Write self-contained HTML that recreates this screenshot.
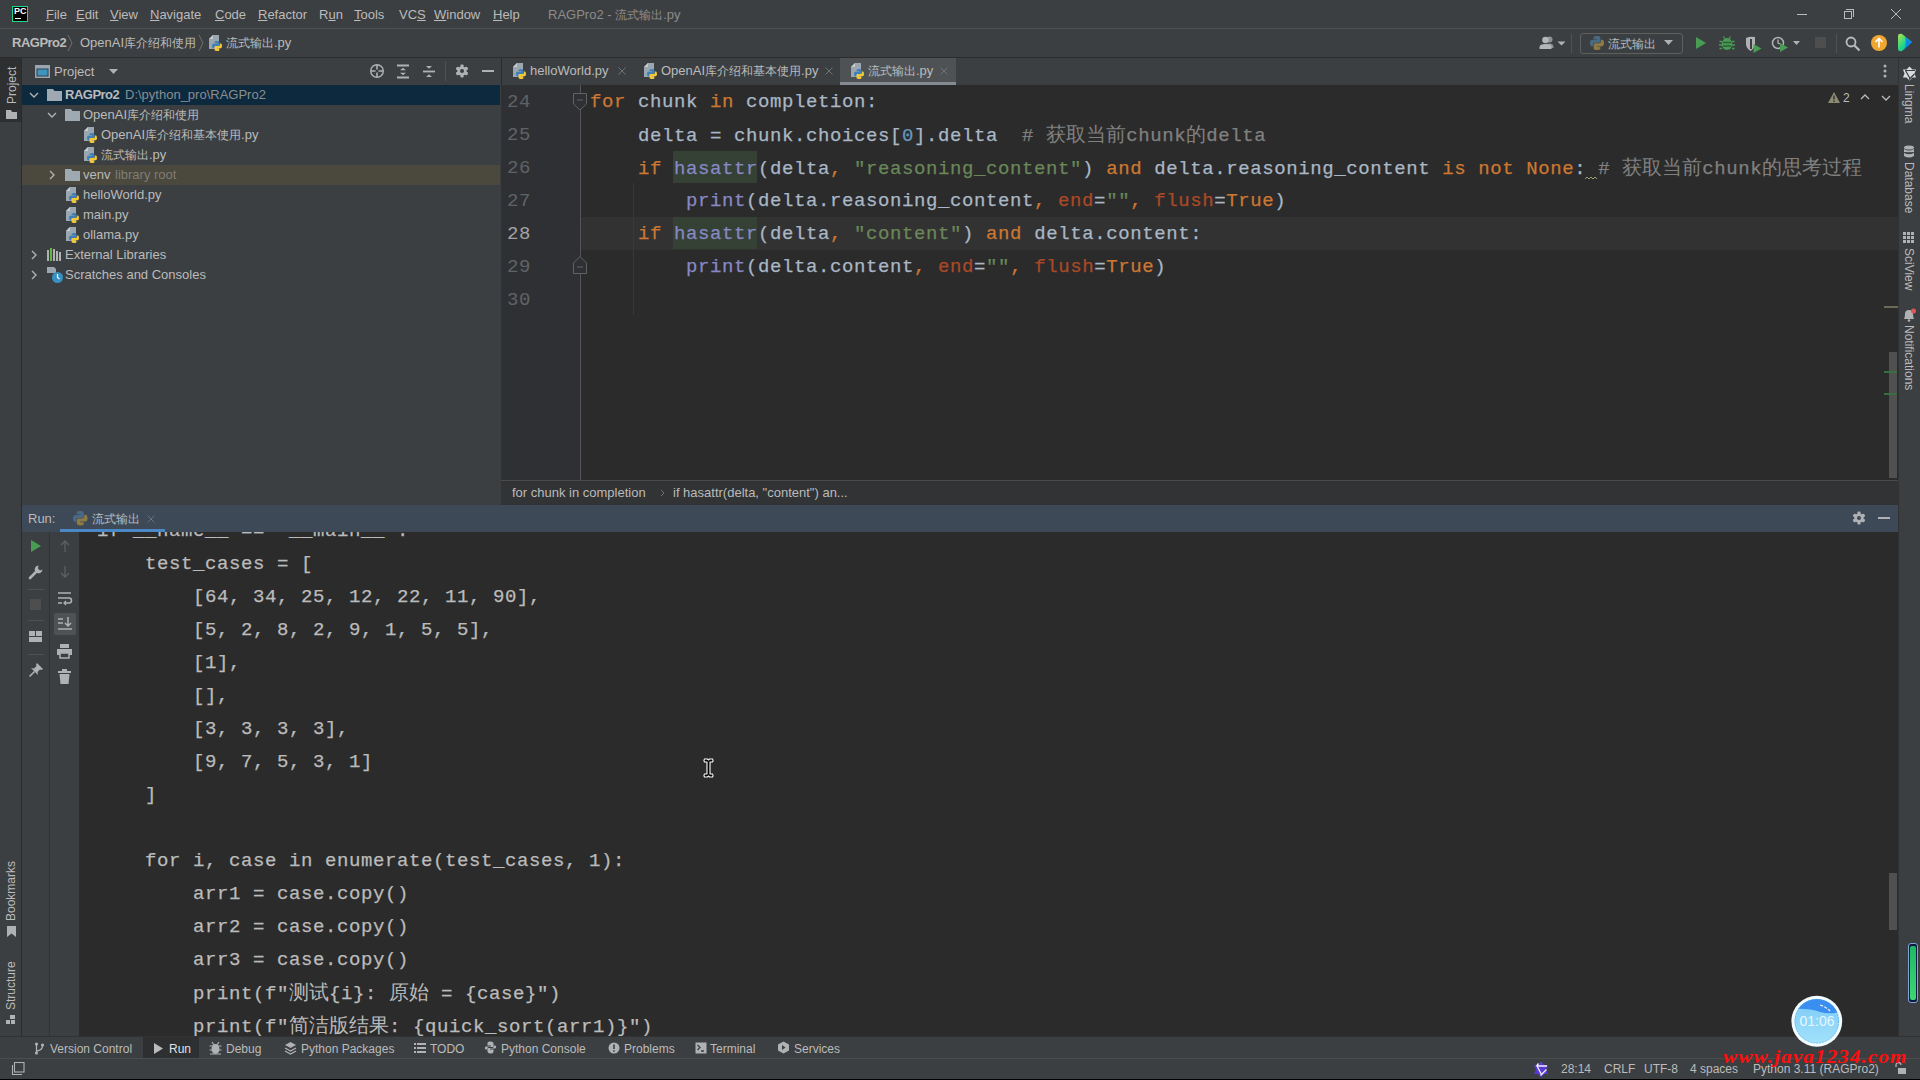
<!DOCTYPE html>
<html><head><meta charset="utf-8">
<style>
*{margin:0;padding:0;box-sizing:border-box}
html,body{width:1920px;height:1080px;overflow:hidden;background:#3c3f41;font-family:"Liberation Sans",sans-serif;color:#bbbbbb}
.a{position:absolute}
.ui{font-size:13px;white-space:nowrap;line-height:16px}
.mono{font-family:"Liberation Mono",monospace;font-size:19px;letter-spacing:0.6px;white-space:pre;line-height:33px;-webkit-text-stroke:0.25px currentColor}
.mj{font-size:20px;letter-spacing:0;-webkit-text-stroke:0}
.k{color:#cc7832}.s{color:#6a8759}.n{color:#6897bb}.c{color:#808080}.b{color:#8888c6}.p{color:#aa4926}.i{color:#a9b7c6}
.cj{font-size:12px}
.vt{transform-origin:0 0;transform:rotate(-90deg);white-space:nowrap;font-size:12px;line-height:14px}
.vtr{transform-origin:0 0;transform:rotate(90deg);white-space:nowrap;font-size:12px;line-height:14px}
</style></head><body>



<!-- title bar -->
<div class="a" style="left:0;top:0;width:1920px;height:29px;background:#3c3f41;border-bottom:1px solid #4d4f51"></div>
<div class="a" style="left:12px;top:6px;width:16px;height:16px;background:#000;border:1px solid #21d789"></div>
<div class="a" style="left:14px;top:7px;font-size:9px;font-weight:bold;color:#fff;line-height:9px">PC</div>
<div class="a" style="left:15px;top:18px;width:6px;height:1px;background:#fff"></div>
<div class="a ui" style="left:46px;top:7px;color:#bbbbbb">
<span style="position:absolute;left:0"><u>F</u>ile</span>
<span style="position:absolute;left:30px"><u>E</u>dit</span>
<span style="position:absolute;left:64px"><u>V</u>iew</span>
<span style="position:absolute;left:104px"><u>N</u>avigate</span>
<span style="position:absolute;left:169px"><u>C</u>ode</span>
<span style="position:absolute;left:212px"><u>R</u>efactor</span>
<span style="position:absolute;left:273px">R<u>u</u>n</span>
<span style="position:absolute;left:308px"><u>T</u>ools</span>
<span style="position:absolute;left:353px">VC<u>S</u></span>
<span style="position:absolute;left:388px"><u>W</u>indow</span>
<span style="position:absolute;left:447px"><u>H</u>elp</span>
</div>
<div class="a ui" style="left:548px;top:7px;color:#8c8c8c">RAGPro2 - <span class="cj">流式输出</span>.py</div>
<!-- window controls -->
<div class="a" style="left:1797px;top:14px;width:10px;height:1px;background:#bbb"></div>
<div class="a" style="left:1844px;top:11px;width:8px;height:8px;border:1px solid #bbb"></div>
<div class="a" style="left:1846px;top:9px;width:8px;height:8px;border-top:1px solid #bbb;border-right:1px solid #bbb"></div>
<svg class="a" style="left:1891px;top:9px" width="10" height="10"><path d="M0 0L10 10M10 0L0 10" stroke="#bbb" stroke-width="1"/></svg>

<!-- nav bar -->
<div class="a" style="left:0;top:29px;width:1920px;height:29px;background:#3c3f41;border-bottom:1px solid #2b2b2b"></div>
<div class="a ui" style="left:12px;top:35px;font-weight:bold;color:#bbbbbb;letter-spacing:-0.5px">RAGPro2</div>
<div class="a ui" style="left:80px;top:35px;color:#bbbbbb">OpenAI<span class="cj">库介绍和使用</span></div>
<div class="a ui" style="left:226px;top:35px;color:#bbbbbb"><span class="cj">流式输出</span>.py</div>
<svg class="a" style="left:67px;top:34px" width="6" height="18"><path d="M1 1L5 9L1 17" stroke="#6f7274" fill="none"/></svg>
<svg class="a" style="left:198px;top:34px" width="6" height="18"><path d="M1 1L5 9L1 17" stroke="#6f7274" fill="none"/></svg>
<svg class="a" style="left:209px;top:35px" width="16" height="17"><path d="M0 4L4 0H10V14H0Z" fill="#9aa7b0"/><path d="M0 4H4V0Z" fill="#c5ccd1"/><g transform="translate(3 6)"><path d="M5 0C2.5 0 2.6 1.1 2.6 1.1V2.3H5.1V2.7H1.6C1.6 2.7 0 2.5 0 5C0 7.5 1.4 7.4 1.4 7.4H2.2V6.3C2.2 6.3 2.2 4.9 3.6 4.9H6.1C6.1 4.9 7.4 4.9 7.4 3.6V1.3C7.4 1.3 7.6 0 5 0Z" fill="#3e7fba"/><path d="M5 0C2.5 0 2.6 1.1 2.6 1.1V2.3H5.1V2.7H1.6C1.6 2.7 0 2.5 0 5C0 7.5 1.4 7.4 1.4 7.4H2.2V6.3C2.2 6.3 2.2 4.9 3.6 4.9H6.1C6.1 4.9 7.4 4.9 7.4 3.6V1.3C7.4 1.3 7.6 0 5 0Z" fill="#f4c935" transform="rotate(180 5 5)"/></g></svg>


<!-- nav bar right toolbar -->
<svg class="a" style="left:1538px;top:35px" width="30" height="16"><circle cx="11.5" cy="4.5" r="3" fill="#8f9193"/><path d="M8 13V10.5Q8 8.5 11.5 8.5Q15.5 8.5 15.5 12V13Z" fill="#8f9193"/><circle cx="7.5" cy="5" r="3.3" fill="#b4b6b8"/><path d="M1.5 14V12Q1.5 9 7.5 9Q13.5 9 13.5 12V14Z" fill="#b4b6b8"/><path d="M19.5 6.5H27.5L23.5 10.5Z" fill="#afb1b3"/></svg>
<div class="a" style="left:1571px;top:34px;width:1px;height:19px;background:#515151"></div>
<div class="a" style="left:1580px;top:33px;width:103px;height:21px;border:1px solid #5e6060;border-radius:3px"></div>
<svg class="a" style="left:1590px;top:36px" width="14" height="14"><g transform="scale(1.4)"><path d="M5 0C2.5 0 2.6 1.1 2.6 1.1V2.3H5.1V2.7H1.6C1.6 2.7 0 2.5 0 5C0 7.5 1.4 7.4 1.4 7.4H2.2V6.3C2.2 6.3 2.2 4.9 3.6 4.9H6.1C6.1 4.9 7.4 4.9 7.4 3.6V1.3C7.4 1.3 7.6 0 5 0Z" fill="#4a6a84"/><path d="M5 0C2.5 0 2.6 1.1 2.6 1.1V2.3H5.1V2.7H1.6C1.6 2.7 0 2.5 0 5C0 7.5 1.4 7.4 1.4 7.4H2.2V6.3C2.2 6.3 2.2 4.9 3.6 4.9H6.1C6.1 4.9 7.4 4.9 7.4 3.6V1.3C7.4 1.3 7.6 0 5 0Z" fill="#8e7a44" transform="rotate(180 5 5)"/></g></svg>
<div class="a ui" style="left:1608px;top:36px;color:#bbbbbb"><span class="cj">流式输出</span></div>
<svg class="a" style="left:1664px;top:40px" width="9" height="5"><path d="M0 0H9L4.5 5Z" fill="#afb1b3"/></svg>
<svg class="a" style="left:1695px;top:36px" width="12" height="14"><path d="M1 1L11 7L1 13Z" fill="#499c54"/></svg>
<svg class="a" style="left:1719px;top:35px" width="16" height="16"><path d="M4.5 1.5L6 4M11.5 1.5L10 4" stroke="#499c54" stroke-width="1.3"/><ellipse cx="8" cy="9" rx="5.2" ry="6" fill="#499c54"/><path d="M0.5 6.5H3M13 6.5H15.5M0 10H3M13 10H16M0.5 13.5H3M13 13.5H15.5" stroke="#499c54" stroke-width="1.3"/><path d="M4 7.5H12M4 11H12" stroke="#2f5c35" stroke-width="1.4"/></svg>
<svg class="a" style="left:1745px;top:36px" width="18" height="17"><path d="M1 2Q5 0 10 1V8Q10 12 5.5 15Q1 12 1 8Z" fill="#afb1b3"/><path d="M6 3V13" stroke="#3c3f41" stroke-width="2"/><path d="M8.5 8L16.5 12.5L8.5 17Z" fill="#499c54"/></svg>
<svg class="a" style="left:1771px;top:35px" width="32" height="17"><circle cx="7" cy="8" r="5.5" stroke="#afb1b3" stroke-width="1.5" fill="none"/><path d="M7 4.5V8L9 9" stroke="#afb1b3" stroke-width="1.3" fill="none"/><path d="M9 8L17 12.5L9 17Z" fill="#499c54"/><path d="M22 6H29L25.5 10Z" fill="#afb1b3"/></svg>
<div class="a" style="left:1815px;top:37px;width:11px;height:11px;background:#4e4e4e"></div>
<div class="a" style="left:1836px;top:34px;width:1px;height:19px;background:#515151"></div>
<svg class="a" style="left:1845px;top:36px" width="16" height="16"><circle cx="6" cy="6" r="4.5" stroke="#bbb" stroke-width="1.8" fill="none"/><path d="M9.5 9.5L14.5 14.5" stroke="#bbb" stroke-width="2.2"/></svg>
<div class="a" style="left:1871px;top:35px;width:16px;height:16px;border-radius:50%;background:#f0a732"></div>
<svg class="a" style="left:1871px;top:35px" width="16" height="16"><path d="M8 3.5V12.5M4.5 7L8 3.5L11.5 7" stroke="#fff" stroke-width="1.6" fill="none"/></svg>
<svg class="a" style="left:1897px;top:33px" width="16" height="19"><defs><linearGradient id="jbg" x1="0" y1="0" x2="1" y2="1"><stop offset="0" stop-color="#b8e04a"/><stop offset=".5" stop-color="#21d789"/><stop offset="1" stop-color="#0aa3c9"/></linearGradient></defs><path d="M1 3Q1 0 5 1L15 9L5 18Q1 19 1 15Z" fill="url(#jbg)"/><path d="M8 4L15 9L7 17Q10 10 8 4Z" fill="#087cfa" opacity=".85"/></svg>

<!-- left strip -->
<div class="a" style="left:0;top:58px;width:22px;height:978px;background:#3c3f41;border-right:1px solid #2b2b2b"></div>
<div class="a" style="left:0;top:58px;width:21px;height:64px;background:#2d2f30"></div>
<div class="a vt" style="left:5px;top:104px;color:#bbbbbb">Project</div>
<svg class="a" style="left:6px;top:110px" width="11" height="9"><path d="M0 0H5L6 2H11V9H0Z" fill="#afb1b3"/></svg>
<div class="a vt" style="left:4px;top:921px;color:#bbbbbb">Bookmarks</div>
<svg class="a" style="left:7px;top:926px" width="9" height="11"><path d="M0 0H9V11L4.5 7.5L0 11Z" fill="#afb1b3"/></svg>
<div class="a vt" style="left:4px;top:1010px;color:#bbbbbb">Structure</div>
<svg class="a" style="left:6px;top:1015px" width="10" height="10"><rect x="4" y="0" width="5" height="4" fill="#afb1b3"/><rect x="0" y="5" width="4" height="4" fill="#afb1b3"/><rect x="5" y="5" width="4" height="4" fill="#afb1b3"/></svg>

<!-- project panel -->
<div class="a" style="left:22px;top:58px;width:479px;height:447px;background:#3c3f41"></div>
<svg class="a" style="left:35px;top:65px" width="15" height="13"><rect x="0" y="0" width="15" height="13" fill="#9aa7b0"/><rect x="1.5" y="3.5" width="12" height="8" fill="#2f4150"/><rect x="2.5" y="4.5" width="10" height="6" fill="#3f93bd"/></svg>
<div class="a ui" style="left:54px;top:64px;color:#bbbbbb">Project</div>
<svg class="a" style="left:109px;top:69px" width="9" height="5"><path d="M0 0H9L4.5 5Z" fill="#afb1b3"/></svg>
<svg class="a" style="left:369px;top:63px" width="16" height="16"><circle cx="8" cy="8" r="6.3" stroke="#afb1b3" stroke-width="1.4" fill="none"/><path d="M8 2V6.5M8 9.5V14M2 8H6.5M9.5 8H14" stroke="#afb1b3" stroke-width="1.6"/></svg>
<svg class="a" style="left:395px;top:63px" width="16" height="16"><path d="M2 2.5H14M2 14.5H14" stroke="#afb1b3" stroke-width="1.8"/><path d="M5 7.3L8 4.8L11 7.3ZM5 9.7L8 12.2L11 9.7Z" fill="#afb1b3"/></svg>
<svg class="a" style="left:421px;top:63px" width="16" height="16"><path d="M2 8.5H14" stroke="#afb1b3" stroke-width="1.8"/><path d="M5 3H11L8 5.8ZM5 14H11L8 11.2Z" fill="#afb1b3"/></svg>
<div class="a" style="left:445px;top:61px;width:1px;height:20px;background:#4f5254"></div>
<svg class="a" style="left:454px;top:63px" width="16" height="16"><g fill="#afb1b3"><circle cx="8" cy="8" r="4.6"/><rect x="6.4" y="1.5" width="3.2" height="13" rx="1"/><rect x="6.4" y="1.5" width="3.2" height="13" rx="1" transform="rotate(60 8 8)"/><rect x="6.4" y="1.5" width="3.2" height="13" rx="1" transform="rotate(-60 8 8)"/></g><circle cx="8" cy="8" r="2" fill="#3c3f41"/></svg>
<div class="a" style="left:482px;top:70px;width:12px;height:2px;background:#afb1b3"></div>

<!-- tree -->
<div class="a" style="left:22px;top:85px;width:478px;height:20px;background:#0d293e"></div>
<div class="a" style="left:22px;top:165px;width:478px;height:20px;background:#4b483d"></div>



<svg class="a" style="left:29px;top:92px" width="10" height="6"><path d="M1 1L5 5L9 1" stroke="#afb1b3" stroke-width="1.4" fill="none"/></svg>
<svg class="a" style="left:47px;top:88px" width="16" height="14"><path d="M0 1H6L7.5 3H15V13H0Z" fill="#9ea9b1"/></svg>
<div class="a ui" style="left:65px;top:87px;font-weight:bold;color:#bbbbbb;letter-spacing:-0.5px">RAGPro2</div>
<div class="a ui" style="left:125px;top:87px;color:#8b8e91">D:\python_pro\RAGPro2</div>
<svg class="a" style="left:47px;top:112px" width="10" height="6"><path d="M1 1L5 5L9 1" stroke="#afb1b3" stroke-width="1.4" fill="none"/></svg>
<svg class="a" style="left:65px;top:108px" width="16" height="14"><path d="M0 1H6L7.5 3H15V13H0Z" fill="#9ea9b1"/></svg>
<div class="a ui" style="left:83px;top:107px">OpenAI<span class="cj">库介绍和使用</span></div>
<svg class="a" style="left:84px;top:127px" width="16" height="17"><path d="M0 4L4 0H10V14H0Z" fill="#9aa7b0"/><path d="M0 4H4V0Z" fill="#c5ccd1"/><g transform="translate(3 6)"><path d="M5 0C2.5 0 2.6 1.1 2.6 1.1V2.3H5.1V2.7H1.6C1.6 2.7 0 2.5 0 5C0 7.5 1.4 7.4 1.4 7.4H2.2V6.3C2.2 6.3 2.2 4.9 3.6 4.9H6.1C6.1 4.9 7.4 4.9 7.4 3.6V1.3C7.4 1.3 7.6 0 5 0Z" fill="#3e7fba"/><path d="M5 0C2.5 0 2.6 1.1 2.6 1.1V2.3H5.1V2.7H1.6C1.6 2.7 0 2.5 0 5C0 7.5 1.4 7.4 1.4 7.4H2.2V6.3C2.2 6.3 2.2 4.9 3.6 4.9H6.1C6.1 4.9 7.4 4.9 7.4 3.6V1.3C7.4 1.3 7.6 0 5 0Z" fill="#f4c935" transform="rotate(180 5 5)"/></g></svg>
<div class="a ui" style="left:101px;top:127px">OpenAI<span class="cj">库介绍和基本使用</span>.py</div>
<svg class="a" style="left:84px;top:147px" width="16" height="17"><path d="M0 4L4 0H10V14H0Z" fill="#9aa7b0"/><path d="M0 4H4V0Z" fill="#c5ccd1"/><g transform="translate(3 6)"><path d="M5 0C2.5 0 2.6 1.1 2.6 1.1V2.3H5.1V2.7H1.6C1.6 2.7 0 2.5 0 5C0 7.5 1.4 7.4 1.4 7.4H2.2V6.3C2.2 6.3 2.2 4.9 3.6 4.9H6.1C6.1 4.9 7.4 4.9 7.4 3.6V1.3C7.4 1.3 7.6 0 5 0Z" fill="#3e7fba"/><path d="M5 0C2.5 0 2.6 1.1 2.6 1.1V2.3H5.1V2.7H1.6C1.6 2.7 0 2.5 0 5C0 7.5 1.4 7.4 1.4 7.4H2.2V6.3C2.2 6.3 2.2 4.9 3.6 4.9H6.1C6.1 4.9 7.4 4.9 7.4 3.6V1.3C7.4 1.3 7.6 0 5 0Z" fill="#f4c935" transform="rotate(180 5 5)"/></g></svg>
<div class="a ui" style="left:101px;top:147px"><span class="cj">流式输出</span>.py</div>
<svg class="a" style="left:49px;top:170px" width="6" height="10"><path d="M1 1L5 5L1 9" stroke="#afb1b3" stroke-width="1.4" fill="none"/></svg>
<svg class="a" style="left:65px;top:168px" width="16" height="14"><path d="M0 1H6L7.5 3H15V13H0Z" fill="#9ea9b1"/></svg>
<div class="a ui" style="left:83px;top:167px">venv</div>
<div class="a ui" style="left:115px;top:167px;color:#7f7d75">library root</div>
<svg class="a" style="left:66px;top:187px" width="16" height="17"><path d="M0 4L4 0H10V14H0Z" fill="#9aa7b0"/><path d="M0 4H4V0Z" fill="#c5ccd1"/><g transform="translate(3 6)"><path d="M5 0C2.5 0 2.6 1.1 2.6 1.1V2.3H5.1V2.7H1.6C1.6 2.7 0 2.5 0 5C0 7.5 1.4 7.4 1.4 7.4H2.2V6.3C2.2 6.3 2.2 4.9 3.6 4.9H6.1C6.1 4.9 7.4 4.9 7.4 3.6V1.3C7.4 1.3 7.6 0 5 0Z" fill="#3e7fba"/><path d="M5 0C2.5 0 2.6 1.1 2.6 1.1V2.3H5.1V2.7H1.6C1.6 2.7 0 2.5 0 5C0 7.5 1.4 7.4 1.4 7.4H2.2V6.3C2.2 6.3 2.2 4.9 3.6 4.9H6.1C6.1 4.9 7.4 4.9 7.4 3.6V1.3C7.4 1.3 7.6 0 5 0Z" fill="#f4c935" transform="rotate(180 5 5)"/></g></svg>
<div class="a ui" style="left:83px;top:187px">helloWorld.py</div>
<svg class="a" style="left:66px;top:207px" width="16" height="17"><path d="M0 4L4 0H10V14H0Z" fill="#9aa7b0"/><path d="M0 4H4V0Z" fill="#c5ccd1"/><g transform="translate(3 6)"><path d="M5 0C2.5 0 2.6 1.1 2.6 1.1V2.3H5.1V2.7H1.6C1.6 2.7 0 2.5 0 5C0 7.5 1.4 7.4 1.4 7.4H2.2V6.3C2.2 6.3 2.2 4.9 3.6 4.9H6.1C6.1 4.9 7.4 4.9 7.4 3.6V1.3C7.4 1.3 7.6 0 5 0Z" fill="#3e7fba"/><path d="M5 0C2.5 0 2.6 1.1 2.6 1.1V2.3H5.1V2.7H1.6C1.6 2.7 0 2.5 0 5C0 7.5 1.4 7.4 1.4 7.4H2.2V6.3C2.2 6.3 2.2 4.9 3.6 4.9H6.1C6.1 4.9 7.4 4.9 7.4 3.6V1.3C7.4 1.3 7.6 0 5 0Z" fill="#f4c935" transform="rotate(180 5 5)"/></g></svg>
<div class="a ui" style="left:83px;top:207px">main.py</div>
<svg class="a" style="left:66px;top:227px" width="16" height="17"><path d="M0 4L4 0H10V14H0Z" fill="#9aa7b0"/><path d="M0 4H4V0Z" fill="#c5ccd1"/><g transform="translate(3 6)"><path d="M5 0C2.5 0 2.6 1.1 2.6 1.1V2.3H5.1V2.7H1.6C1.6 2.7 0 2.5 0 5C0 7.5 1.4 7.4 1.4 7.4H2.2V6.3C2.2 6.3 2.2 4.9 3.6 4.9H6.1C6.1 4.9 7.4 4.9 7.4 3.6V1.3C7.4 1.3 7.6 0 5 0Z" fill="#3e7fba"/><path d="M5 0C2.5 0 2.6 1.1 2.6 1.1V2.3H5.1V2.7H1.6C1.6 2.7 0 2.5 0 5C0 7.5 1.4 7.4 1.4 7.4H2.2V6.3C2.2 6.3 2.2 4.9 3.6 4.9H6.1C6.1 4.9 7.4 4.9 7.4 3.6V1.3C7.4 1.3 7.6 0 5 0Z" fill="#f4c935" transform="rotate(180 5 5)"/></g></svg>
<div class="a ui" style="left:83px;top:227px">ollama.py</div>
<svg class="a" style="left:31px;top:250px" width="6" height="10"><path d="M1 1L5 5L1 9" stroke="#afb1b3" stroke-width="1.4" fill="none"/></svg>
<svg class="a" style="left:47px;top:248px" width="14" height="13"><g fill="#afb1b3"><rect x="0" y="2" width="2" height="11"/><rect x="3" y="0" width="2" height="13" fill="#62b543"/><rect x="6" y="1" width="2" height="12"/><rect x="9" y="3" width="2" height="10"/><rect x="12" y="4" width="2" height="9"/></g></svg>
<div class="a ui" style="left:65px;top:247px">External Libraries</div>
<svg class="a" style="left:31px;top:270px" width="6" height="10"><path d="M1 1L5 5L1 9" stroke="#afb1b3" stroke-width="1.4" fill="none"/></svg>
<svg class="a" style="left:47px;top:267px" width="16" height="16"><path d="M0 0H7L9 2V6H0Z" fill="#9aa7b0"/><circle cx="10.5" cy="10.5" r="5.5" fill="#3592c4"/><path d="M10.5 7V10.5L12.5 12" stroke="#fff" stroke-width="1.2" fill="none"/></svg>
<div class="a ui" style="left:65px;top:267px">Scratches and Consoles</div>
<div class="a" style="left:501px;top:58px;width:1397px;height:27px;background:#3c3f41;border-left:1px solid #2b2b2b"></div>
<div class="a" style="left:840px;top:58px;width:116px;height:27px;background:#4e5254"></div>
<div class="a" style="left:840px;top:82px;width:116px;height:3px;background:#868a93"></div>
<svg class="a" style="left:513px;top:63px" width="16" height="17"><path d="M0 4L4 0H10V14H0Z" fill="#9aa7b0"/><path d="M0 4H4V0Z" fill="#c5ccd1"/><g transform="translate(3 6)"><path d="M5 0C2.5 0 2.6 1.1 2.6 1.1V2.3H5.1V2.7H1.6C1.6 2.7 0 2.5 0 5C0 7.5 1.4 7.4 1.4 7.4H2.2V6.3C2.2 6.3 2.2 4.9 3.6 4.9H6.1C6.1 4.9 7.4 4.9 7.4 3.6V1.3C7.4 1.3 7.6 0 5 0Z" fill="#3e7fba"/><path d="M5 0C2.5 0 2.6 1.1 2.6 1.1V2.3H5.1V2.7H1.6C1.6 2.7 0 2.5 0 5C0 7.5 1.4 7.4 1.4 7.4H2.2V6.3C2.2 6.3 2.2 4.9 3.6 4.9H6.1C6.1 4.9 7.4 4.9 7.4 3.6V1.3C7.4 1.3 7.6 0 5 0Z" fill="#f4c935" transform="rotate(180 5 5)"/></g></svg>
<div class="a ui" style="left:530px;top:63px">helloWorld.py</div>
<svg class="a" style="left:618px;top:67px" width="8" height="8"><path d="M0.5 0.5L7.5 7.5M7.5 0.5L0.5 7.5" stroke="#6f7274" stroke-width="1"/></svg>
<svg class="a" style="left:644px;top:63px" width="16" height="17"><path d="M0 4L4 0H10V14H0Z" fill="#9aa7b0"/><path d="M0 4H4V0Z" fill="#c5ccd1"/><g transform="translate(3 6)"><path d="M5 0C2.5 0 2.6 1.1 2.6 1.1V2.3H5.1V2.7H1.6C1.6 2.7 0 2.5 0 5C0 7.5 1.4 7.4 1.4 7.4H2.2V6.3C2.2 6.3 2.2 4.9 3.6 4.9H6.1C6.1 4.9 7.4 4.9 7.4 3.6V1.3C7.4 1.3 7.6 0 5 0Z" fill="#3e7fba"/><path d="M5 0C2.5 0 2.6 1.1 2.6 1.1V2.3H5.1V2.7H1.6C1.6 2.7 0 2.5 0 5C0 7.5 1.4 7.4 1.4 7.4H2.2V6.3C2.2 6.3 2.2 4.9 3.6 4.9H6.1C6.1 4.9 7.4 4.9 7.4 3.6V1.3C7.4 1.3 7.6 0 5 0Z" fill="#f4c935" transform="rotate(180 5 5)"/></g></svg>
<div class="a ui" style="left:661px;top:63px">OpenAI<span class="cj">库介绍和基本使用</span>.py</div>
<svg class="a" style="left:825px;top:67px" width="8" height="8"><path d="M0.5 0.5L7.5 7.5M7.5 0.5L0.5 7.5" stroke="#6f7274" stroke-width="1"/></svg>
<svg class="a" style="left:851px;top:63px" width="16" height="17"><path d="M0 4L4 0H10V14H0Z" fill="#9aa7b0"/><path d="M0 4H4V0Z" fill="#c5ccd1"/><g transform="translate(3 6)"><path d="M5 0C2.5 0 2.6 1.1 2.6 1.1V2.3H5.1V2.7H1.6C1.6 2.7 0 2.5 0 5C0 7.5 1.4 7.4 1.4 7.4H2.2V6.3C2.2 6.3 2.2 4.9 3.6 4.9H6.1C6.1 4.9 7.4 4.9 7.4 3.6V1.3C7.4 1.3 7.6 0 5 0Z" fill="#3e7fba"/><path d="M5 0C2.5 0 2.6 1.1 2.6 1.1V2.3H5.1V2.7H1.6C1.6 2.7 0 2.5 0 5C0 7.5 1.4 7.4 1.4 7.4H2.2V6.3C2.2 6.3 2.2 4.9 3.6 4.9H6.1C6.1 4.9 7.4 4.9 7.4 3.6V1.3C7.4 1.3 7.6 0 5 0Z" fill="#f4c935" transform="rotate(180 5 5)"/></g></svg>
<div class="a ui" style="left:868px;top:63px"><span class="cj">流式输出</span>.py</div>
<svg class="a" style="left:940px;top:67px" width="8" height="8"><path d="M0.5 0.5L7.5 7.5M7.5 0.5L0.5 7.5" stroke="#6f7274" stroke-width="1"/></svg>
<svg class="a" style="left:1883px;top:64px" width="4" height="14"><circle cx="2" cy="2" r="1.5" fill="#afb1b3"/><circle cx="2" cy="7" r="1.5" fill="#afb1b3"/><circle cx="2" cy="12" r="1.5" fill="#afb1b3"/></svg>
<div class="a" style="left:501px;top:85px;width:1397px;height:395px;background:#2b2b2b"></div>
<div class="a" style="left:501px;top:85px;width:79px;height:395px;background:#2f3034"></div>
<div class="a" style="left:580px;top:85px;width:1px;height:395px;background:#555555"></div>
<div class="a" style="left:581px;top:217px;width:1317px;height:33px;background:#323232"></div>
<div class="a" style="left:673px;top:151px;width:84px;height:32px;background:#344134"></div>
<div class="a" style="left:673px;top:217px;width:84px;height:32px;background:#344134"></div>
<div class="a" style="left:633px;top:183px;width:1px;height:132px;background:#393939"></div>
<div class="a mono" style="left:500px;top:86px;width:31px;text-align:right;color:#606366;-webkit-text-stroke:0">24</div>
<div class="a mono" style="left:500px;top:119px;width:31px;text-align:right;color:#606366;-webkit-text-stroke:0">25</div>
<div class="a mono" style="left:500px;top:152px;width:31px;text-align:right;color:#606366;-webkit-text-stroke:0">26</div>
<div class="a mono" style="left:500px;top:185px;width:31px;text-align:right;color:#606366;-webkit-text-stroke:0">27</div>
<div class="a mono" style="left:500px;top:218px;width:31px;text-align:right;color:#a4a3a3;-webkit-text-stroke:0">28</div>
<div class="a mono" style="left:500px;top:251px;width:31px;text-align:right;color:#606366;-webkit-text-stroke:0">29</div>
<div class="a mono" style="left:500px;top:284px;width:31px;text-align:right;color:#606366;-webkit-text-stroke:0">30</div>
<svg class="a" style="left:573px;top:93px" width="15" height="18"><path d="M0.5 0.5H13.5V11L7 17L0.5 11Z" fill="#2f3034" stroke="#606366"/><path d="M4 7H10" stroke="#606366"/></svg>
<svg class="a" style="left:573px;top:256px" width="15" height="18"><path d="M0.5 17.5H13.5V7L7 0.5L0.5 7Z" fill="#2f3034" stroke="#606366"/><path d="M4 11H10" stroke="#606366"/></svg>
<div class="a mono" style="left:590px;top:86px"><span class="k">for</span><span class="i"> chunk </span><span class="k">in</span><span class="i"> completion:</span></div>
<div class="a mono" style="left:590px;top:119px"><span class="i">    delta = chunk.choices[</span><span class="n">0</span><span class="i">].delta  </span><span class="c"># <span class="mj">获取当前</span>chunk<span class="mj">的</span>delta</span></div>
<div class="a mono" style="left:590px;top:152px"><span class="k">    if </span><span class="b">hasattr</span><span class="i">(delta</span><span class="k">, </span><span class="s">"reasoning_content"</span><span class="i">) </span><span class="k">and </span><span class="i">delta.reasoning_content </span><span class="k">is not None</span><span class="i">: </span><span class="c"># <span class="mj">获取当前</span>chunk<span class="mj">的思考过程</span></span></div>
<div class="a mono" style="left:590px;top:185px"><span class="b">        print</span><span class="i">(delta.reasoning_content</span><span class="k">, </span><span class="p">end</span><span class="i">=</span><span class="s">""</span><span class="k">, </span><span class="p">flush</span><span class="i">=</span><span class="k">True</span><span class="i">)</span></div>
<div class="a mono" style="left:590px;top:218px"><span class="k">    if </span><span class="b">hasattr</span><span class="i">(delta</span><span class="k">, </span><span class="s">"content"</span><span class="i">) </span><span class="k">and </span><span class="i">delta.content:</span></div>
<div class="a mono" style="left:590px;top:251px"><span class="b">        print</span><span class="i">(delta.content</span><span class="k">, </span><span class="p">end</span><span class="i">=</span><span class="s">""</span><span class="k">, </span><span class="p">flush</span><span class="i">=</span><span class="k">True</span><span class="i">)</span></div>
<svg class="a" style="left:1585px;top:176px" width="12" height="4"><path d="M0 3L2 1L4 3L6 1L8 3L10 1L12 3" stroke="#9c9c78" stroke-width="1" fill="none"/></svg>
<svg class="a" style="left:1828px;top:92px" width="12" height="11"><path d="M6 0L12 11H0Z" fill="#8c8a71"/><path d="M6 3.5V7.5M6 8.5V10" stroke="#2b2b2b" stroke-width="1.3"/></svg>
<div class="a ui" style="left:1843px;top:90px;font-size:12px;color:#bbbbbb">2</div>
<svg class="a" style="left:1860px;top:94px" width="10" height="6"><path d="M1 5L5 1L9 5" stroke="#bbb" stroke-width="1.3" fill="none"/></svg>
<svg class="a" style="left:1881px;top:95px" width="10" height="6"><path d="M1 1L5 5L9 1" stroke="#bbb" stroke-width="1.3" fill="none"/></svg>
<div class="a" style="left:1884px;top:306px;width:14px;height:2px;background:#6a6a57"></div>
<div class="a" style="left:1889px;top:352px;width:8px;height:126px;background:#505050"></div>
<div class="a" style="left:1884px;top:371px;width:13px;height:2px;background:#3b6e3f"></div>
<div class="a" style="left:1884px;top:393px;width:13px;height:2px;background:#3b6e3f"></div>
<div class="a" style="left:501px;top:480px;width:1397px;height:25px;background:#313335;border-top:1px solid #4a4a4a"></div>
<div class="a ui" style="left:512px;top:485px;color:#bbbbbb">for chunk in completion</div>
<svg class="a" style="left:660px;top:489px" width="5" height="8"><path d="M1 1L4 4L1 7" stroke="#6f7274" fill="none"/></svg>
<div class="a ui" style="left:673px;top:485px;color:#bbbbbb">if hasattr(delta, "content") an...</div>
<div class="a" style="left:22px;top:505px;width:1876px;height:27px;background:#3d4957"></div>
<div class="a ui" style="left:28px;top:511px;color:#bbbbbb">Run:</div>
<svg class="a" style="left:73px;top:511px" width="15" height="15"><g transform="scale(1.45)"><path d="M5 0C2.5 0 2.6 1.1 2.6 1.1V2.3H5.1V2.7H1.6C1.6 2.7 0 2.5 0 5C0 7.5 1.4 7.4 1.4 7.4H2.2V6.3C2.2 6.3 2.2 4.9 3.6 4.9H6.1C6.1 4.9 7.4 4.9 7.4 3.6V1.3C7.4 1.3 7.6 0 5 0Z" fill="#4a6a84"/><path d="M5 0C2.5 0 2.6 1.1 2.6 1.1V2.3H5.1V2.7H1.6C1.6 2.7 0 2.5 0 5C0 7.5 1.4 7.4 1.4 7.4H2.2V6.3C2.2 6.3 2.2 4.9 3.6 4.9H6.1C6.1 4.9 7.4 4.9 7.4 3.6V1.3C7.4 1.3 7.6 0 5 0Z" fill="#8e7a44" transform="rotate(180 5 5)"/></g></svg>
<div class="a ui" style="left:92px;top:511px;color:#bbbbbb"><span class="cj">流式输出</span></div>
<svg class="a" style="left:147px;top:515px" width="8" height="8"><path d="M0.5 0.5L7.5 7.5M7.5 0.5L0.5 7.5" stroke="#6f7274" stroke-width="1"/></svg>
<div class="a" style="left:60px;top:529px;width:105px;height:3px;background:#4a88c7"></div>
<svg class="a" style="left:1851px;top:510px" width="16" height="16"><g fill="#afb1b3"><circle cx="8" cy="8" r="4.6"/><rect x="6.4" y="1.5" width="3.2" height="13" rx="1"/><rect x="6.4" y="1.5" width="3.2" height="13" rx="1" transform="rotate(60 8 8)"/><rect x="6.4" y="1.5" width="3.2" height="13" rx="1" transform="rotate(-60 8 8)"/></g><circle cx="8" cy="8" r="2" fill="#3d4957"/></svg>
<div class="a" style="left:1878px;top:517px;width:12px;height:2px;background:#afb1b3"></div>
<div class="a" style="left:22px;top:532px;width:28px;height:504px;background:#3c3f41;border-right:1px solid #323232"></div>
<div class="a" style="left:50px;top:532px;width:29px;height:504px;background:#3c3f41"></div>
<div class="a" style="left:79px;top:532px;width:1819px;height:504px;background:#2b2b2b;overflow:hidden">
<div class="a mono" style="left:18px;top:-17px;color:#bbbbbb">if __name__ == "__main__":</div>
<div class="a mono" style="left:18px;top:16px;color:#bbbbbb">    test_cases = [</div>
<div class="a mono" style="left:18px;top:49px;color:#bbbbbb">        [64, 34, 25, 12, 22, 11, 90],</div>
<div class="a mono" style="left:18px;top:82px;color:#bbbbbb">        [5, 2, 8, 2, 9, 1, 5, 5],</div>
<div class="a mono" style="left:18px;top:115px;color:#bbbbbb">        [1],</div>
<div class="a mono" style="left:18px;top:148px;color:#bbbbbb">        [],</div>
<div class="a mono" style="left:18px;top:181px;color:#bbbbbb">        [3, 3, 3, 3],</div>
<div class="a mono" style="left:18px;top:214px;color:#bbbbbb">        [9, 7, 5, 3, 1]</div>
<div class="a mono" style="left:18px;top:247px;color:#bbbbbb">    ]</div>
<div class="a mono" style="left:18px;top:280px;color:#bbbbbb"></div>
<div class="a mono" style="left:18px;top:313px;color:#bbbbbb">    for i, case in enumerate(test_cases, 1):</div>
<div class="a mono" style="left:18px;top:346px;color:#bbbbbb">        arr1 = case.copy()</div>
<div class="a mono" style="left:18px;top:379px;color:#bbbbbb">        arr2 = case.copy()</div>
<div class="a mono" style="left:18px;top:412px;color:#bbbbbb">        arr3 = case.copy()</div>
<div class="a mono" style="left:18px;top:445px;color:#bbbbbb">        print(f"<span class="mj">测试</span>{i}: <span class="mj">原始</span> = {case}")</div>
<div class="a mono" style="left:18px;top:478px;color:#bbbbbb">        print(f"<span class="mj">简洁版结果</span>: {quick_sort(arr1)}")</div>
</div>
<svg class="a" style="left:30px;top:539px" width="12" height="14"><path d="M1 1L11 7L1 13Z" fill="#499c54"/></svg>
<svg class="a" style="left:28px;top:564px" width="16" height="16"><path d="M2 14L8.5 7.5" stroke="#afb1b3" stroke-width="2.6" stroke-linecap="round"/><path d="M10.5 1.5A4 4 0 0 0 7 7L9 9A4 4 0 0 0 14.5 5.5L12 6.5L10 4.5Z" fill="#afb1b3"/></svg>
<div class="a" style="left:30px;top:599px;width:11px;height:11px;background:#4e4e4e"></div>
<div class="a" style="left:28px;top:589px;width:16px;height:1px;background:#515151"></div>
<div class="a" style="left:28px;top:620px;width:16px;height:1px;background:#515151"></div>
<svg class="a" style="left:29px;top:631px" width="14" height="12"><rect x="0" y="0" width="6" height="5" fill="#afb1b3"/><rect x="7" y="0" width="6" height="5" fill="#afb1b3"/><rect x="0" y="6" width="13" height="5" fill="#afb1b3"/></svg>
<div class="a" style="left:28px;top:654px;width:16px;height:1px;background:#515151"></div>
<svg class="a" style="left:28px;top:662px" width="16" height="16"><path d="M1.5 14.5L6.5 9.5" stroke="#afb1b3" stroke-width="1.6"/><path d="M9 1L15 7L13.5 8L12 7.5L9.5 10L10 13L3 6L6 6.5L8.5 4L8 2.5Z" fill="#afb1b3"/></svg>
<svg class="a" style="left:59px;top:539px" width="12" height="14"><path d="M6 13V2M2 6L6 2L10 6" stroke="#5d6063" stroke-width="1.3" fill="none"/></svg>
<svg class="a" style="left:59px;top:565px" width="12" height="14"><path d="M6 1V12M2 8L6 12L10 8" stroke="#5d6063" stroke-width="1.3" fill="none"/></svg>
<svg class="a" style="left:57px;top:591px" width="16" height="15"><path d="M1 2H14M1 7H12A2.5 2.5 0 0 1 12 12H8M1 12H5" stroke="#afb1b3" stroke-width="1.5" fill="none"/><path d="M9 10L7 12L9 14" stroke="#afb1b3" stroke-width="1.3" fill="none"/></svg>
<div class="a" style="left:54px;top:613px;width:22px;height:22px;background:#4e5254;border-radius:2px"></div>
<svg class="a" style="left:57px;top:616px" width="16" height="16"><path d="M1 3H6M1 7H6M1 13H15M11 1V10M8 7L11 10L14 7" stroke="#afb1b3" stroke-width="1.5" fill="none"/></svg>
<svg class="a" style="left:57px;top:644px" width="15" height="15"><rect x="3" y="0" width="9" height="4" fill="#afb1b3"/><rect x="0" y="5" width="15" height="6" fill="#afb1b3"/><rect x="3" y="9" width="9" height="5" fill="#3c3f41" stroke="#afb1b3" stroke-width="1.5"/></svg>
<svg class="a" style="left:58px;top:669px" width="13" height="15"><rect x="0" y="2" width="13" height="2" fill="#afb1b3"/><rect x="4" y="0" width="5" height="2" fill="#afb1b3"/><path d="M1.5 5H11.5L10.5 15H2.5Z" fill="#afb1b3"/></svg>
<svg class="a" style="left:703px;top:758px" width="11" height="21"><path d="M1.5 1H4.5L5.5 2L6.5 1H9.5Q10.5 2.5 9.5 4H7V16H9.5Q10.5 17.5 9.5 19H6.5L5.5 18L4.5 19H1.5Q0.5 17.5 1.5 16H4V4H1.5Q0.5 2.5 1.5 1Z" fill="#000" stroke="#fff" stroke-width="1.1"/></svg>
<div class="a" style="left:1889px;top:873px;width:8px;height:57px;background:#505050"></div>
<div class="a" style="left:1898px;top:58px;width:22px;height:978px;background:#3c3f41;border-left:1px solid #323232"></div>
<svg class="a" style="left:1902px;top:66px" width="15" height="15"><path d="M7.5 0.5L10.5 3.5H14L12.5 7.5L14 11.5H10.5L7.5 14.5L4.5 11.5H1L2.5 7.5L1 3.5H4.5Z" fill="#d9dadb"/><path d="M3 4.5H13M3.5 4.5L8 12.5M7 13.5L12.5 8" stroke="#3c3f41" stroke-width="1.2" fill="none"/></svg>
<div class="a vtr" style="left:1916px;top:84px;color:#bbbbbb">Lingma</div>
<svg class="a" style="left:1903px;top:145px" width="12" height="13"><ellipse cx="6" cy="2.5" rx="5" ry="2" fill="#afb1b3"/><path d="M1 4V11Q6 14 11 11V4Q6 7 1 4Z" fill="#afb1b3"/><path d="M1 7.5Q6 10 11 7.5" stroke="#3c3f41"/></svg>
<div class="a vtr" style="left:1916px;top:162px;color:#bbbbbb">Database</div>
<svg class="a" style="left:1903px;top:232px" width="12" height="11"><g fill="#afb1b3"><rect x="0" y="0" width="3" height="3"/><rect x="4" y="0" width="3" height="3"/><rect x="8" y="0" width="3" height="3"/><rect x="0" y="4" width="3" height="3"/><rect x="4" y="4" width="3" height="3"/><rect x="8" y="4" width="3" height="3"/><rect x="0" y="8" width="3" height="3"/><rect x="4" y="8" width="3" height="3"/><rect x="8" y="8" width="3" height="3"/></g></svg>
<div class="a vtr" style="left:1916px;top:248px;color:#bbbbbb">SciView</div>
<svg class="a" style="left:1902px;top:308px" width="14" height="14"><path d="M2 11Q3 9 3 6Q3 2 7 2Q11 2 11 6Q11 9 12 11Z" fill="#afb1b3"/><circle cx="7" cy="12.5" r="1.3" fill="#afb1b3"/><circle cx="11.5" cy="3" r="2.5" fill="#e05555"/></svg>
<div class="a vtr" style="left:1916px;top:325px;color:#bbbbbb">Notifications</div>
<svg class="a" style="left:1908px;top:943px" width="10" height="60"><defs><linearGradient id="gg" x1="0" y1="0" x2="0" y2="1"><stop offset="0" stop-color="#1fb865"/><stop offset="1" stop-color="#3ed774"/></linearGradient></defs><rect x="0.5" y="0.5" width="9" height="59" rx="2.5" fill="#0b1a3e" stroke="#7fa6d9"/><rect x="2" y="3" width="6" height="54" rx="2" fill="url(#gg)"/></svg>
<div class="a" style="left:0;top:1036px;width:1920px;height:22px;background:#3c3f41;border-top:1px solid #323232"></div>
<div class="a" style="left:143px;top:1037px;width:56px;height:21px;background:#2d2f30"></div>
<div class="a ui" style="left:50px;top:1041px;font-size:12px;color:#bbbbbb">Version Control</div>
<div class="a ui" style="left:169px;top:1041px;font-size:12px;color:#dfe1e5">Run</div>
<div class="a ui" style="left:226px;top:1041px;font-size:12px;color:#bbbbbb">Debug</div>
<div class="a ui" style="left:301px;top:1041px;font-size:12px;color:#bbbbbb">Python Packages</div>
<div class="a ui" style="left:430px;top:1041px;font-size:12px;color:#bbbbbb">TODO</div>
<div class="a ui" style="left:501px;top:1041px;font-size:12px;color:#bbbbbb">Python Console</div>
<div class="a ui" style="left:624px;top:1041px;font-size:12px;color:#bbbbbb">Problems</div>
<div class="a ui" style="left:710px;top:1041px;font-size:12px;color:#bbbbbb">Terminal</div>
<div class="a ui" style="left:794px;top:1041px;font-size:12px;color:#bbbbbb">Services</div>
<svg class="a" style="left:34px;top:1042px" width="11" height="13"><circle cx="2.5" cy="2" r="1.6" fill="#afb1b3"/><circle cx="2.5" cy="11" r="1.6" fill="#afb1b3"/><circle cx="8.5" cy="3" r="1.6" fill="#afb1b3"/><path d="M2.5 3V10M8.5 4Q8.5 8 3 9" stroke="#afb1b3" stroke-width="1.3" fill="none"/></svg>
<svg class="a" style="left:154px;top:1043px" width="9" height="11"><path d="M0 0L9 5.5L0 11Z" fill="#bbbbbb"/></svg>
<svg class="a" style="left:209px;top:1041px" width="13" height="14"><ellipse cx="6.5" cy="8" rx="4" ry="5" fill="#afb1b3"/><path d="M0.5 5H12.5M0.5 9H12.5M1 13H12M3 1L5 4M10 1L8 4" stroke="#afb1b3" stroke-width="1.2"/></svg>
<svg class="a" style="left:284px;top:1041px" width="13" height="14"><path d="M6.5 1L12 4L6.5 7L1 4Z" fill="#afb1b3"/><path d="M1 7L6.5 10L12 7M1 10L6.5 13L12 10" stroke="#afb1b3" stroke-width="1.3" fill="none"/></svg>
<svg class="a" style="left:414px;top:1043px" width="12" height="10"><g fill="#afb1b3"><rect x="0" y="0" width="2" height="2"/><rect x="3" y="0" width="9" height="2"/><rect x="0" y="4" width="2" height="2"/><rect x="3" y="4" width="9" height="2"/><rect x="0" y="8" width="2" height="2"/><rect x="3" y="8" width="9" height="2"/></g></svg>
<svg class="a" style="left:484px;top:1041px" width="13" height="13"><path d="M6.5 0.5C3.5 0.5 3.5 1.8 3.5 3V4.5H7V5.5H2C0.5 5.5 0.5 8.5 2 8.5H3.5V7C3.5 6.3 4 6 5 6H8C9 6 9.5 5.5 9.5 4.5V2.5C9.5 1.2 8.3 0.5 6.5 0.5Z" fill="#afb1b3"/><path d="M6.5 12.5C9.5 12.5 9.5 11.2 9.5 10V8.5H6V7.5H11C12.5 7.5 12.5 4.5 11 4.5H9.5V6C9.5 6.7 9 7 8 7H5C4 7 3.5 7.5 3.5 8.5V10.5C3.5 11.8 4.7 12.5 6.5 12.5Z" fill="#afb1b3"/></svg>
<svg class="a" style="left:608px;top:1042px" width="12" height="12"><circle cx="6" cy="6" r="5.5" fill="#afb1b3"/><path d="M6 2.5V7M6 8.3V9.8" stroke="#3c3f41" stroke-width="1.6"/></svg>
<svg class="a" style="left:695px;top:1042px" width="12" height="12"><rect x="0.5" y="0.5" width="11" height="11" fill="#afb1b3"/><path d="M2.5 3L5 5.5L2.5 8M6 9H9" stroke="#3c3f41" stroke-width="1.3" fill="none"/></svg>
<svg class="a" style="left:777px;top:1041px" width="13" height="13"><path d="M6.5 0.5L12 3.5V9.5L6.5 12.5L1 9.5V3.5Z" fill="#afb1b3"/><path d="M5 4L8.5 6.5L5 9Z" fill="#3c3f41"/></svg>
<div class="a" style="left:0;top:1058px;width:1920px;height:22px;background:#3c3f41;border-top:1px solid #4b4d4f;border-bottom:1px solid #000"></div>
<svg class="a" style="left:11px;top:1062px" width="14" height="14"><rect x="3.5" y="0.5" width="9.5" height="9.5" fill="none" stroke="#afb1b3" stroke-width="1.1"/><path d="M1.5 3V12.5H11" stroke="#afb1b3" stroke-width="1.1" fill="none"/></svg>
<svg class="a" style="left:1533px;top:1061px" width="16" height="17"><path d="M8 0.5L11 4H15L13 8.5L15 13H11L8 16.5L5 13H1L3 8.5L1 4H5Z" fill="#5a3bd1"/><path d="M3.5 5H14M4 5L8.5 13.5M7.5 14.5L13.5 8.5M5.5 2.5L3.5 5" stroke="#f4f0ff" stroke-width="1.3" fill="none"/></svg>
<div class="a ui" style="left:1561px;top:1061px;font-size:12px;color:#bbbbbb">28:14</div>
<div class="a ui" style="left:1604px;top:1061px;font-size:12px;color:#bbbbbb">CRLF</div>
<div class="a ui" style="left:1644px;top:1061px;font-size:12px;color:#bbbbbb">UTF-8</div>
<div class="a ui" style="left:1690px;top:1061px;font-size:12px;color:#bbbbbb">4 spaces</div>
<div class="a ui" style="left:1753px;top:1061px;font-size:12px;color:#bbbbbb">Python 3.11 (RAGPro2)</div>
<svg class="a" style="left:1894px;top:1062px" width="12" height="12"><path d="M2 5V3A2.5 2.5 0 0 1 7 3" stroke="#afb1b3" stroke-width="1.3" fill="none"/><rect x="4" y="6" width="8" height="6" fill="#afb1b3"/></svg>
<div class="a" style="left:1723px;top:1047px;font-family:'Liberation Serif',serif;font-style:italic;font-weight:bold;font-size:19px;line-height:20px;color:#ff0d0d;white-space:nowrap;letter-spacing:0.9px;transform-origin:0 0;transform:scaleX(1.12)">www.java1234.com</div>
<svg class="a" style="left:1790px;top:995px" width="54" height="54"><defs><linearGradient id="tg" x1="0" y1="0" x2="0" y2="1"><stop offset="0" stop-color="#7ccaf6"/><stop offset="1" stop-color="#a2e2fb"/></linearGradient><clipPath id="tc"><circle cx="26.8" cy="26.25" r="22.3"/></clipPath></defs><circle cx="26.8" cy="26.25" r="25.4" fill="#f2fbff"/><circle cx="26.8" cy="26.25" r="22.3" fill="url(#tg)"/><g clip-path="url(#tc)"><path d="M0 0H54V15Q50 17 45 18Q37 19 30 17Q20 13 0 14Z" fill="#3a8ef0"/></g><circle cx="26.8" cy="26.25" r="21.8" fill="none" stroke="#4d9ee0" stroke-width="0.6" stroke-dasharray="1.5 1.5"/><path d="M30 10Q36 12 40 16" stroke="#e8f6ff" stroke-width="1.2" stroke-dasharray="3 1.5" fill="none"/></svg>
<div class="a" style="left:1792px;top:1013px;width:50px;font-size:14px;line-height:17px;text-align:center;color:#e6f8ff">01:06</div>
</body></html>
